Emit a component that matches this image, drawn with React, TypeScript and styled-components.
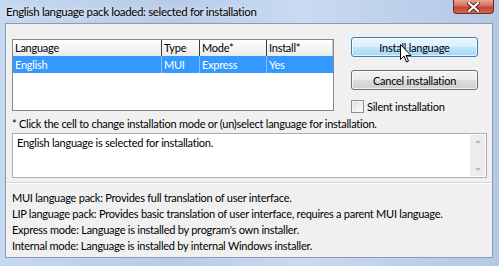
import React from "react";
import styled, { createGlobalStyle } from "styled-components";

const GlobalStyle = createGlobalStyle`
    html, body {
        margin: 0;
        padding: 0;
        overflow: hidden;
        background: #bfd2ec;
    }
    * {
        box-sizing: border-box;
    }
`;

const UI_FONT = `Lato, "Open Sans", "Liberation Sans", sans-serif`;

const Frame = styled.div`
    position: relative;
    width: 499px;
    height: 266px;
    display: flex;
    flex-direction: column;
    padding: 0 6px 8px 5px;
    background: linear-gradient(90deg, #c6d8f0 0%, #b7cbe8 35%, #c9daf1 60%, #b3c8e6 100%);
    font-family: ${UI_FONT};
    font-size: 11px;
    letter-spacing: -0.25px;
    color: #000;
`;

const TitleBar = styled.div`
    height: 23px;
    display: flex;
    align-items: flex-start;
    justify-content: space-between;
`;

const Title = styled.div`
    padding: 5px 0 0 1px;
    font-size: 11.5px;
    letter-spacing: -0.35px;
    color: #000;
    text-shadow: 0 0 6px rgba(255, 255, 255, 0.9);
`;

const CloseButton = styled.div`
    width: 41px;
    height: 14px;
    margin-right: -1px;
    border: 1px solid #6d2b24;
    border-top: none;
    border-radius: 0 0 4px 4px;
    background: linear-gradient(180deg, #e9a294 0%, #d4705f 45%, #c24432 55%, #cf6a4f 100%);
    display: flex;
    align-items: center;
    justify-content: center;
`;

const Client = styled.div`
    flex: 1;
    display: flex;
    flex-direction: column;
    background: #f0f0f0;
    border: 1px solid #8c9cb3;
`;

const Body = styled.div`
    padding: 13px 7px 0 6px;
    display: flex;
    flex-direction: column;
`;

const TopRow = styled.div`
    height: 74px;
    display: flex;
    align-items: flex-start;
`;

const List = styled.div`
    margin-top: 2px;
    width: 322px;
    height: 72px;
    border: 1px solid #828790;
    background: #fff;
`;

const Row = styled.div<{ $selected?: boolean; $header?: boolean }>`
    display: grid;
    grid-template-columns: 149px 38px 67px 1fr;
    height: ${(p) => (p.$header ? "16px" : "17px")};
    background: ${(p) =>
        p.$selected ? "#3399ff" : p.$header ? "linear-gradient(180deg, #ffffff 0%, #f3f3f3 60%, #eaeaea 100%)" : "#fff"};
    color: ${(p) => (p.$selected ? "#fff" : "#000")};
`;

const Cell = styled.div<{ $selected?: boolean; $header?: boolean }>`
    padding-left: 2px;
    line-height: ${(p) => (p.$header ? "16px" : "17px")};
    white-space: nowrap;
    overflow: hidden;
    border-right: 1px solid ${(p) => (p.$header ? "#3b3b3b" : p.$selected ? "#85bff5" : "transparent")};
    &:last-child {
        border-right-color: ${(p) => (p.$header ? "#c9c9c9" : "transparent")};
    }
`;

const Side = styled.div`
    margin-left: 17px;
    width: 127px;
    display: flex;
    flex-direction: column;
`;

const Button = styled.div<{ $hot?: boolean }>`
    height: 20px;
    border-radius: 3px;
    border: 1px solid ${(p) => (p.$hot ? "#3c7fb1" : "#707070")};
    background: ${(p) =>
        p.$hot
            ? "linear-gradient(180deg, #eaf6fd 0%, #d9f0fc 50%, #bee6fd 51%, #a7d9f5 100%)"
            : "linear-gradient(180deg, #f2f2f2 0%, #ebebeb 50%, #dddddd 51%, #cfcfcf 100%)"};
    box-shadow: inset 0 0 0 1px rgba(255, 255, 255, 0.7);
    display: flex;
    align-items: center;
    justify-content: center;
    margin-bottom: 13px;
`;

const CheckRow = styled.label`
    display: flex;
    align-items: center;
    gap: 3px;
    margin-top: -3px;
    height: 13px;
`;

const CheckBox = styled.span`
    width: 13px;
    height: 13px;
    flex: none;
    border: 1px solid #8e8f8f;
    background: linear-gradient(135deg, #dcdcdc 0%, #f4f4f4 70%, #ffffff 100%);
    box-shadow: inset 0 0 0 1px #f4f4f4;
`;

const Note = styled.div`
    margin-top: 5px;
    height: 16px;
    line-height: 16px;
    white-space: nowrap;
`;

const TextBox = styled.div`
    margin-top: 1px;
    width: 475px;
    height: 45px;
    border: 1px solid #abadb3;
    background: #fff;
    display: flex;
`;

const TextContent = styled.div`
    flex: 1;
    padding: 2px 0 0 4px;
`;

const ScrollBar = styled.div`
    width: 15px;
    margin: 1px;
    background: #ececec;
    display: flex;
    flex-direction: column;
    justify-content: space-between;
    align-items: center;
    padding: 5px 0;
`;

const Arrow = styled.span<{ $down?: boolean }>`
    width: 0;
    height: 0;
    border-left: 3px solid transparent;
    border-right: 3px solid transparent;
    ${(p) => (p.$down ? "border-top: 3px solid #b6b6b6;" : "border-bottom: 3px solid #b6b6b6;")}
`;

const InfoPanel = styled.div`
    margin-top: 4px;
    flex: 1;
    border-top: 1px solid #d5d5d5;
    box-shadow: inset 0 1px 0 #ffffff;
    padding: 7px 0 0 6px;
    display: flex;
    flex-direction: column;
`;

const InfoLine = styled.div`
    height: 16px;
    line-height: 16px;
    white-space: nowrap;
`;

const Cursor = styled.svg`
    position: absolute;
    left: 400px;
    top: 44px;
`;

const columns = ["Language", "Type", "Mode*", "Install*"];
const english = ["English", "MUI", "Express", "Yes"];

const info = [
    "MUI language pack: Provides full translation of user interface.",
    "LIP language pack: Provides basic translation of user interface, requires a parent MUI language.",
    "Express mode: Language is installed by program's own installer.",
    "Internal mode: Language is installed by internal Windows installer.",
];

export default function App() {
    return (
        <>
            <GlobalStyle />
            <Frame>
                <TitleBar>
                    <Title>English language pack loaded: selected for installation</Title>
                    <CloseButton>
                        <svg width="13" height="10" viewBox="0 0 13 10">
                            <path d="M2 1 L11 9 M11 1 L2 9" stroke="#5a1d16" strokeWidth="4" strokeLinecap="square" />
                            <path d="M2 1 L11 9 M11 1 L2 9" stroke="#ffffff" strokeWidth="2.2" strokeLinecap="square" />
                        </svg>
                    </CloseButton>
                </TitleBar>
                <Client>
                    <Body>
                        <TopRow>
                            <List>
                                <Row $header>
                                    {columns.map((c) => (
                                        <Cell key={c} $header>{c}</Cell>
                                    ))}
                                </Row>
                                <Row $selected>
                                    {english.map((c) => (
                                        <Cell key={c} $selected>{c}</Cell>
                                    ))}
                                </Row>
                            </List>
                            <Side>
                                <Button $hot>Install language</Button>
                                <Button>Cancel installation</Button>
                                <CheckRow>
                                    <CheckBox />
                                    Silent installation
                                </CheckRow>
                            </Side>
                        </TopRow>
                        <Note>* Click the cell to change installation mode or (un)select language for installation.</Note>
                        <TextBox>
                            <TextContent>English language is selected for installation.</TextContent>
                            <ScrollBar>
                                <Arrow />
                                <Arrow $down />
                            </ScrollBar>
                        </TextBox>
                    </Body>
                    <InfoPanel>
                        {info.map((l) => (
                            <InfoLine key={l}>{l}</InfoLine>
                        ))}
                    </InfoPanel>
                </Client>
                <Cursor width="12" height="19" viewBox="0 0 12 19">
                    <path d="M0.5 0.5 L0.5 15.5 L4 12 L6.5 18 L8.5 17 L6 11.5 L11 11.5 Z" fill="#fff" stroke="#000" strokeWidth="1" />
                </Cursor>
            </Frame>
        </>
    );
}
